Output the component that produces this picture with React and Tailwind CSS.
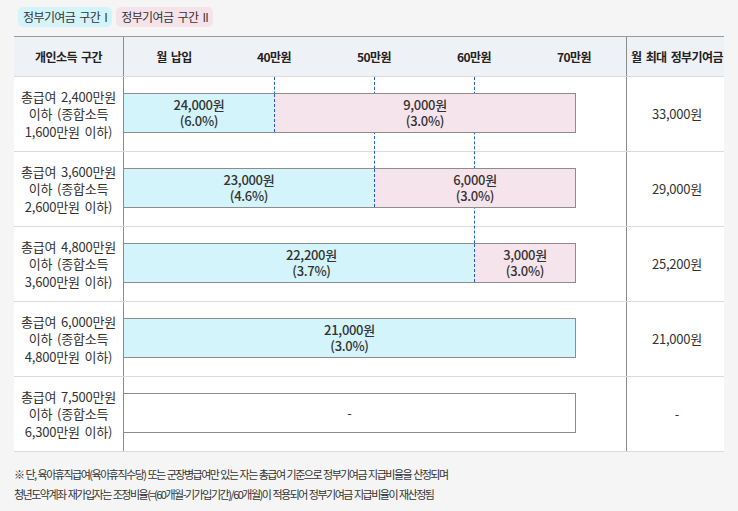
import React from "react";

const rows = [
  {
    label: ["총급여 2,400만원", "이하 (종합소득", "1,600만원 이하)"],
    first: { width: "w-[150px]", amount: "24,000원", rate: "(6.0%)" },
    second: { amount: "9,000원", rate: "(3.0%)" },
    max: "33,000원",
  },
  {
    label: ["총급여 3,600만원", "이하 (종합소득", "2,600만원 이하)"],
    first: { width: "w-[250px]", amount: "23,000원", rate: "(4.6%)" },
    second: { amount: "6,000원", rate: "(3.0%)" },
    max: "29,000원",
  },
  {
    label: ["총급여 4,800만원", "이하 (종합소득", "3,600만원 이하)"],
    first: { width: "w-[350px] pl-[25px]", amount: "22,200원", rate: "(3.7%)" },
    second: { amount: "3,000원", rate: "(3.0%)" },
    max: "25,200원",
  },
  {
    label: ["총급여 6,000만원", "이하 (종합소득", "4,800만원 이하)"],
    first: { width: "flex-1", amount: "21,000원", rate: "(3.0%)" },
    second: null,
    max: "21,000원",
  },
  {
    label: ["총급여 7,500만원", "이하 (종합소득", "6,300만원 이하)"],
    first: null,
    second: null,
    max: "-",
  },
];

const ticks = ["월 납입", "40만원", "50만원", "60만원", "70만원"];

const BarText = ({ amount, rate }) => (
  <div className="flex flex-col items-center text-[13px] leading-[16px] font-medium tracking-[-0.3px] text-[#333]">
    <span>{amount}</span>
    <span>{rate}</span>
  </div>
);

const App = () => {
  return (
    <div
      className="min-h-[511px] bg-[#f5f5f5] px-[14px] pt-[7px] text-[#333] [word-spacing:2px]"
      style={{ fontFamily: '"Noto Sans CJK KR", "Noto Sans", sans-serif' }}
    >
      {/* 범례 */}
      <div className="flex gap-[4px] pl-[4px]">
        <span className="h-[20px] rounded-[5px] bg-[#d4f4fb] px-[5px] text-[12px] leading-[20px] tracking-[-0.6px]">
          정부기여금 구간 I
        </span>
        <span className="h-[20px] rounded-[5px] bg-[#f6e3ea] px-[5px] text-[12px] leading-[20px] tracking-[-0.6px]">
          정부기여금 구간 II
        </span>
      </div>

      {/* 표 */}
      <div className="relative mt-[9px] border-t border-[#999] bg-white">
        {/* 구간 경계 점선 (막대 뒤) */}
        <div className="absolute left-[260px] top-[40px] h-[56px] border-l border-dashed border-[#1f5fd6]" />
        <div className="absolute left-[360px] top-[40px] h-[131px] border-l border-dashed border-[#1f5fd6]" />
        <div className="absolute left-[460px] top-[40px] h-[206px] border-l border-dashed border-[#1f5fd6]" />

        <div className="grid h-[40px] grid-cols-[109px_503px_101px] border-b border-[#dcdcdc] bg-[#eef1f6] text-[12px] font-bold tracking-[-0.6px] text-[#222]">
          <div className="flex items-center justify-center">개인소득 구간</div>
          <div className="flex border-l border-[#8c8c8c]">
            {ticks.map((t) => (
              <div key={t} className="flex w-[100px] items-center justify-center">
                {t}
              </div>
            ))}
          </div>
          <div className="flex items-center justify-center border-l border-[#8c8c8c]">
            월 최대 정부기여금
          </div>
        </div>

        {rows.map((r, i) => (
          <div
            key={i}
            className="grid h-[75px] grid-cols-[109px_503px_101px] border-b border-[#dcdcdc]"
          >
            <div className="flex flex-col items-center justify-center text-[13px] leading-[17.5px] tracking-[-0.2px]">
              {r.label.map((l) => (
                <span key={l}>{l}</span>
              ))}
            </div>
            <div className="border-l border-[#8c8c8c] pt-[16px]">
              <div className="relative flex h-[40px] w-[452px] border-y border-r border-[#8c8c8c] bg-white">
                {r.first && (
                  <div className={`${r.first.width} flex items-center justify-center bg-[#d4f4fb]`}>
                    <BarText amount={r.first.amount} rate={r.first.rate} />
                  </div>
                )}
                {r.second && (
                  <div className="flex flex-1 items-center justify-center border-l border-dashed border-[#1f5fd6] bg-[#f6e4ec]">
                    <BarText amount={r.second.amount} rate={r.second.rate} />
                  </div>
                )}
                {!r.first && !r.second && (
                  <div className="flex flex-1 items-center justify-center text-[13px]">-</div>
                )}
              </div>
            </div>
            <div className="flex items-center justify-center border-l border-[#8c8c8c] text-[13px] tracking-[-0.2px]">
              {r.max}
            </div>
          </div>
        ))}
      </div>

      <div className="mt-[12px] pb-[10px] text-[11px] leading-[20px] tracking-[-1.5px] text-[#333] [word-spacing:1px]">
        <p>※ 단, 육아휴직급여(육아휴직수당) 또는 군장병급여만 있는 자는 총급여 기준으로 정부기여금 지급비율을 산정되며</p>
        <p>청년도약계좌 재가입자는 조정비율(=(60개월-기가입기간)/60개월)이 적용되어 정부기여금 지급비율이 재산정됨</p>
      </div>
    </div>
  );
};

export default App;
